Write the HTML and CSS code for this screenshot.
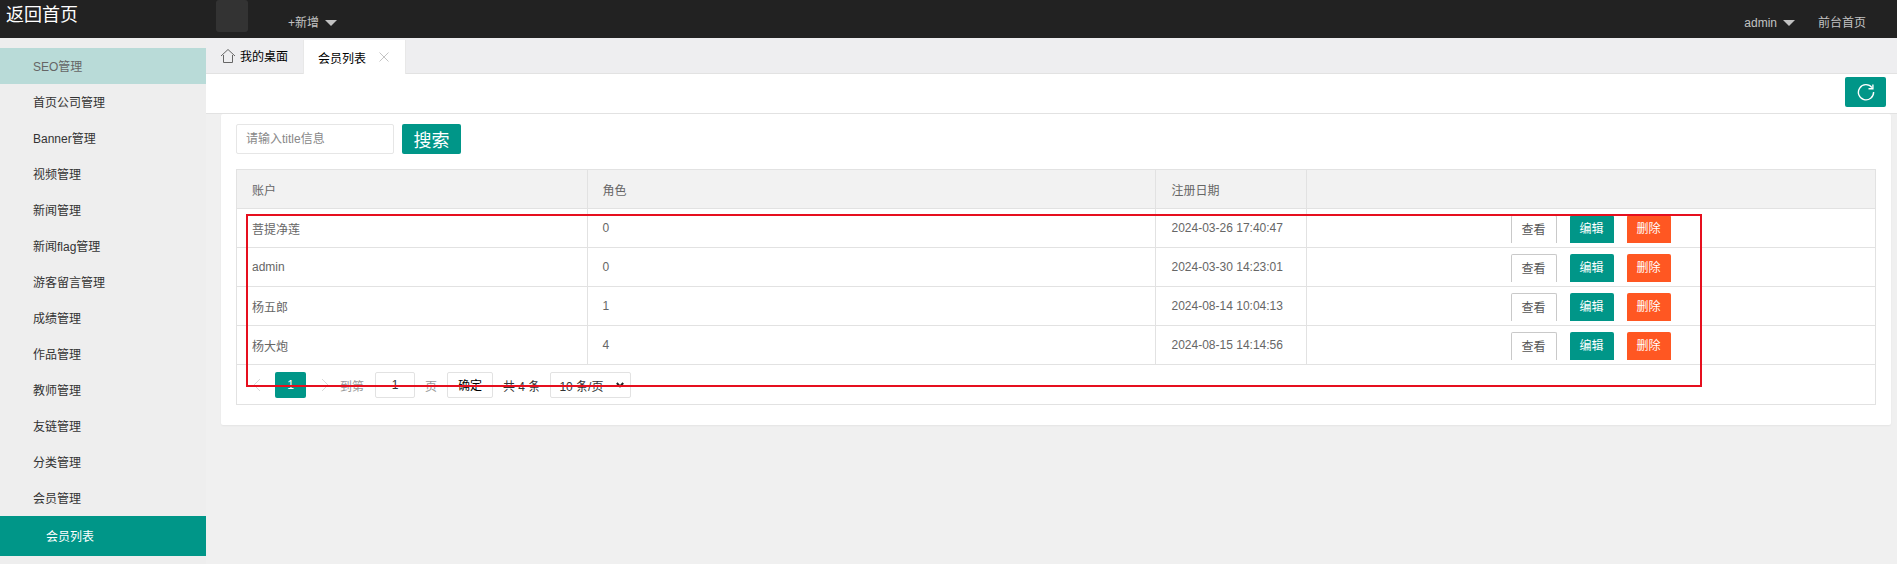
FILE: index.html
```html
<!DOCTYPE html>
<html lang="zh">
<head>
<meta charset="utf-8">
<title>会员列表</title>
<link rel="stylesheet" href="styles.css">
</head>
<body>
<header class="topbar">
  <a class="logo">返回首页</a>
  <span class="square"></span>
  <a class="nav-add">+新增<i class="caret"></i></a>
  <div class="top-right">
    <a class="nav-user">admin<i class="caret"></i></a>
    <a class="nav-front">前台首页</a>
  </div>
</header>
<div class="layout">
  <aside class="sidebar">
    <ul class="menu">
      <li class="menu-item hover">SEO管理</li>
      <li class="menu-item">首页公司管理</li>
      <li class="menu-item">Banner管理</li>
      <li class="menu-item">视频管理</li>
      <li class="menu-item">新闻管理</li>
      <li class="menu-item">新闻flag管理</li>
      <li class="menu-item">游客留言管理</li>
      <li class="menu-item">成绩管理</li>
      <li class="menu-item">作品管理</li>
      <li class="menu-item">教师管理</li>
      <li class="menu-item">友链管理</li>
      <li class="menu-item">分类管理</li>
      <li class="menu-item">会员管理</li>
      <li class="menu-sub">会员列表</li>
    </ul>
  </aside>
  <main class="main">
    <div class="tabs">
      <div class="tab">
        <svg class="home" viewBox="0 0 16 16" width="16" height="16"><path d="M1 8 8 1.5 15 8M3.5 7v7.5h9V7" fill="none" stroke="#666" stroke-width="1"/></svg>
        我的桌面
      </div>
      <div class="tab active">会员列表<svg class="close" viewBox="0 0 10 10" width="10" height="10"><path d="M.5.5l9 9M9.5.5l-9 9" stroke="#c4c4c4" stroke-width="1" fill="none"/></svg></div>
    </div>
    <div class="toolbar">
      <span class="refresh"><svg viewBox="0 0 18 18" width="18" height="18"><path d="M15 4.6A7.6 7.6 0 1 0 16.6 9" fill="none" stroke="#fff" stroke-width="1.4"/><path d="M15.9 1.4v4.4h-4.4" fill="none" stroke="#fff" stroke-width="1.4"/></svg></span>
    </div>
    <div class="content">
      <section class="card">
        <form class="search">
          <input class="search-input" type="text" placeholder="请输入title信息">
          <button class="search-btn" type="button">搜索</button>
        </form>
        <div class="table-wrap">
          <table class="table">
            <colgroup><col class="c1"><col class="c2"><col class="c3"><col></colgroup>
            <thead>
              <tr><th>账户</th><th>角色</th><th>注册日期</th><th></th></tr>
            </thead>
            <tbody>
              <tr><td>菩提净莲</td><td>0</td><td>2024-03-26 17:40:47</td><td class="ops"><a class="op view">查看</a><a class="op edit">编辑</a><a class="op del">删除</a></td></tr>
              <tr><td>admin</td><td>0</td><td>2024-03-30 14:23:01</td><td class="ops"><a class="op view">查看</a><a class="op edit">编辑</a><a class="op del">删除</a></td></tr>
              <tr><td>杨五郎</td><td>1</td><td>2024-08-14 10:04:13</td><td class="ops"><a class="op view">查看</a><a class="op edit">编辑</a><a class="op del">删除</a></td></tr>
              <tr><td>杨大炮</td><td>4</td><td>2024-08-15 14:14:56</td><td class="ops"><a class="op view">查看</a><a class="op edit">编辑</a><a class="op del">删除</a></td></tr>
            </tbody>
          </table>
          <div class="pager">
            <svg class="chev" viewBox="0 0 8 14" width="8" height="14"><path d="M7 1 1 7l6 6" fill="none" stroke="#d8d8d8"/></svg>
            <span class="page-cur">1</span>
            <svg class="chev next" viewBox="0 0 8 14" width="8" height="14"><path d="M1 1l6 6-6 6" fill="none" stroke="#d8d8d8"/></svg>
            <span class="muted goto">到第</span>
            <input class="page-input" type="text" value="1">
            <span class="muted">页</span>
            <span class="page-ok">确定</span>
            <span class="total">共 4 条</span>
            <span class="page-size">10 条/页<svg viewBox="0 0 8 6" width="8" height="6"><path d="M.8 1 4 4.4 7.2 1" fill="none" stroke="#222" stroke-width="2"/></svg></span>
          </div>
        </div>
      </section>
    </div>
  </main>
</div>
<div class="annotation"></div>
</body>
</html>
```
FILE: styles.css
```css
* { box-sizing: border-box; }
html, body { margin: 0; padding: 0; height: 564px; overflow: hidden; }
body {
  font-family: "Liberation Sans", "Noto Sans CJK SC", sans-serif;
  font-size: 12px;
  color: #666;
  background: #f0f0f0;
  position: relative;
}
.topbar {
  height: 38px;
  background: #222;
  display: flex;
  align-items: flex-start;
  color: #c2c2c2;
}
.logo { width: 216px; padding-left: 6px; color: #fff; font-size: 18px; line-height: 31px; }
.square { width: 32px; height: 32px; background: #333; border-radius: 3px; }
.nav-add { margin-left: 40px; line-height: 46px; display: flex; align-items: center; }
.caret {
  display: inline-block;
  width: 0; height: 0;
  margin-left: 6px;
  border: 6px solid transparent;
  border-top-color: #c2c2c2;
  border-bottom-width: 0;
}
.top-right { margin-left: auto; display: flex; line-height: 46px; padding-right: 31px; }
.nav-user { display: flex; align-items: center; }
.nav-front { margin-left: 23px; }
.layout { display: flex; height: 526px; }
.sidebar { width: 206px; background: #eee; padding-top: 10px; }
.menu { list-style: none; margin: 0; padding: 0; }
.menu-item { height: 36px; line-height: 38px; padding-left: 33px; color: #333; }
.menu-item.hover { background: #b9dbd8; color: #666; }
.menu-sub { height: 40px; line-height: 42px; padding-left: 46px; background: #009688; color: #fff; }
.main { flex: 1; min-width: 0; display: flex; flex-direction: column; }
.tabs {
  height: 36px;
  background: #eeeef0;
  border-bottom: 1px solid #e2e2e2;
  display: flex;
  color: #000;
}
.tab { display: flex; align-items: center; height: 35px; padding: 0 14px; width: 97px; white-space: nowrap; }
.home { margin-right: 4px; flex: none; }
.tab.active { background: #fff; width: 103px; margin-top: 2px; height: 34px; border-left: 1px solid #e8e8e8; border-right: 1px solid #e8e8e8; }
.close { margin-left: 13px; flex: none; }
.toolbar {
  height: 40px;
  background: #fff;
  border-bottom: 1px solid #e2e2e2;
  display: flex;
  justify-content: flex-end;
  padding: 3px 11px 0 0;
}
.refresh {
  width: 41px; height: 30px;
  background: #009688;
  border-radius: 2px;
  display: flex; align-items: center; justify-content: center;
}
.content { flex: 1; padding: 0 6px 0 15px; }
.card { background: #fff; height: 311px; padding: 10px 15px; border-radius: 2px; box-shadow: 0 1px 2px rgba(0,0,0,.05); }
.search { display: flex; height: 30px; margin: 0 0 15px; }
.search-input {
  width: 158px; height: 30px;
  border: 1px solid #e6e6e6;
  border-radius: 2px;
  padding: 0 9px;
  font: inherit;
  outline: none;
}
.search-input::placeholder { color: #888; }
.search-btn {
  width: 59px; height: 30px;
  margin-left: 8px;
  border: 0;
  border-radius: 2px;
  background: #009688;
  color: #fff;
  font-family: inherit;
  font-size: 18px;
  padding: 0;
}
.table-wrap { border: 1px solid #e2e2e2; border-top: 0; height: 236px; }
.table { width: 100%; border-collapse: collapse; table-layout: fixed; }
.c1 { width: 350px; }
.c2 { width: 568px; }
.c3 { width: 151px; }
.table th, .table td {
  border: 1px solid #e2e2e2;
  height: 39px;
  padding: 0 15px;
  font-weight: normal;
  text-align: left;
  color: #666;
  white-space: nowrap;
}
.table tr > :first-child { border-left: 0; }
.table tr > :last-child { border-right: 0; }
.table tr > :nth-child(3) { padding-left: 16px; }
.table thead th { background: #f2f2f2; }
.table tbody td { vertical-align: middle; }
.table .ops { padding: 0 0 0 204px; }
.op { display: inline-block; vertical-align: top; height: 28px; line-height: 28px; text-align: center; color: #fff; margin-right: 13px; margin-top: 1px; }
.view { width: 46px; background: #fff; color: #555; border: 1px solid #c9c9c9; border-bottom: 0; border-radius: 2px 2px 0 0; line-height: 29px; }
.edit { width: 44px; background: #009688; border-radius: 2px 2px 0 0; }
.del { width: 44px; background: #ff5722; border-radius: 2px 2px 0 0; }
.pager { display: flex; align-items: center; height: 40px; padding: 0 0 0 16px; color: #333; }
.chev { flex: none; }
.page-cur { width: 31px; height: 26px; margin-left: 14px; background: #009688; color: #fff; border-radius: 2px; text-align: center; line-height: 26px; }
.chev.next { margin-left: 15px; }
.muted { color: #999; }
.goto { margin-left: 11px; }
.page-input { width: 40px; height: 26px; margin: 0 10px 0 11px; border: 1px solid #e2e2e2; border-radius: 2px; text-align: center; font: inherit; color: #333; padding: 0; outline: none; }
.page-ok { width: 46px; height: 26px; margin-left: 10px; border: 1px solid #e2e2e2; border-radius: 2px; text-align: center; line-height: 26px; color: #000; }
.total { margin-left: 10px; }
.page-size { width: 81px; height: 26px; margin-left: 10px; border: 1px solid #e2e2e2; border-radius: 2px; display: flex; align-items: center; justify-content: space-between; padding: 0 6px 0 8px; color: #333; }
.annotation {
  position: absolute;
  left: 246px; top: 214px;
  width: 1456px; height: 173px;
  border: 2px solid #e60f1e;
  pointer-events: none;
}
```
